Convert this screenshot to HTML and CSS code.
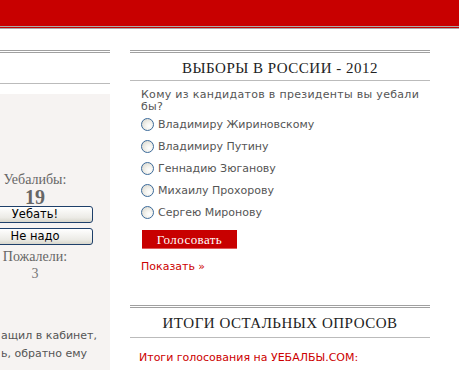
FILE: index.html
```html
<!DOCTYPE html>
<html lang="ru">
<head>
<meta charset="utf-8">
<link rel="stylesheet" href="styles.css">
</head>
<body>
<div class="header"></div>
<div class="main">
  <div class="left">
    <div class="left-title"></div>
    <div class="panel">
      <div class="votes">
        <div class="label">Уебалибы:</div>
        <div class="count">19</div>
        <div class="btn">Уебать!</div>
        <div class="btn">Не надо</div>
        <div class="label">Пожалели:</div>
        <div class="count-small">3</div>
      </div>
      <p class="story">ащил в кабинет,<br>ь, обратно ему</p>
    </div>
  </div>
  <div class="right">
    <div class="box-title">ВЫБОРЫ В РОССИИ - 2012</div>
    <div class="poll">
      <p class="question">Кому из кандидатов в президенты вы уебали бы?</p>
      <div class="option"><span class="radio"></span>Владимиру Жириновскому</div>
      <div class="option"><span class="radio"></span>Владимиру Путину</div>
      <div class="option"><span class="radio"></span>Геннадию Зюганову</div>
      <div class="option"><span class="radio"></span>Михаилу Прохорову</div>
      <div class="option"><span class="radio"></span>Сергею Миронову</div>
      <div class="vote-btn">Голосовать</div>
      <a class="show" href="#">Показать »</a>
    </div>
    <div class="box-title second">ИТОГИ ОСТАЛЬНЫХ ОПРОСОВ</div>
    <p class="results">Итоги голосования на УЕБАЛБЫ.COM:</p>
  </div>
</div>
</body>
</html>
```
FILE: styles.css
```css
html, body {
  margin: 0;
  padding: 0;
  background: #fff;
  overflow: hidden;
}
body {
  font-family: "DejaVu Sans", Verdana, sans-serif;
  font-size: 11px;
  color: #555;
  height: 370px;
}
.header {
  height: 26px;
  background: #c80000;
  border-bottom: 3px double #aaa;
}
.main {
  display: flex;
  gap: 20px;
  padding-top: 21px;
}
.left {
  width: 110px;
  overflow: hidden;
  flex: none;
}
.left-title {
  border-top: 3px double #a0a0a0;
  height: 30px;
  border-bottom: 1px solid #bbb;
}
.panel {
  margin-top: 10px;
  background: #f6f3f2;
  height: 198px;
  padding-top: 78px;
}
.votes {
  margin-left: -23px;
  width: 116px;
  display: flex;
  flex-direction: column;
  align-items: center;
  font-family: "Liberation Serif", "Times New Roman", serif;
  color: #666;
}
.label {
  font-size: 14px;
  line-height: 16px;
}
.count {
  font-size: 20px;
  font-weight: bold;
  line-height: 18px;
  color: #666;
}
.count-small {
  font-size: 14px;
  line-height: 18px;
  color: #777;
}
.btn {
  width: 114px;
  height: 15px;
  box-sizing: content-box;
  border: 1px solid #1e3f6a;
  border-radius: 3px;
  background: linear-gradient(#ffffff, #ecebe6 70%, #d8d6cc);
  font-family: "DejaVu Sans", Tahoma, sans-serif;
  font-size: 11.5px;
  line-height: 15px;
  color: #000;
  text-align: center;
  margin-bottom: 5px;
}
.btn + .btn {
  margin-bottom: 4px;
}
.story {
  margin: 44px 0 0 1px;
  line-height: 18px;
  white-space: nowrap;
}
.right {
  width: 300px;
  flex: none;
}
.box-title {
  border-top: 3px double #a0a0a0;
  border-bottom: 1px solid #bbb;
  height: 27px;
  line-height: 30px;
  text-align: center;
  font-family: "Liberation Serif", "Times New Roman", serif;
  font-size: 15px;
  letter-spacing: 0.5px;
  color: #222;
}
.box-title.second {
  margin-top: 31px;
  height: 29px;
  line-height: 30px;
}
.poll {
  padding-left: 11px;
}
.question {
  margin: 8px 0 0;
  letter-spacing: 0.3px;
  line-height: 12px;
}
.option {
  height: 22px;
  display: flex;
  align-items: center;
  gap: 4px;
}
.radio {
  width: 11px;
  height: 11px;
  border: 1px solid #3b6a9a;
  border-radius: 50%;
  background: radial-gradient(circle at 65% 65%, #fff 0, #f4f3ee 35%, #d4d2c8 100%);
  flex: none;
}
.vote-btn {
  margin: 7px 0 0 1px;
  width: 95px;
  height: 18px;
  background: #c80000;
  border-bottom: 1px solid #e05a5a;
  color: #fff;
  font-family: "Liberation Serif", "Times New Roman", serif;
  font-size: 13px;
  letter-spacing: 0.4px;
  line-height: 19px;
  text-align: center;
}
.show {
  display: block;
  margin-top: 11px;
  line-height: 14px;
  color: #c00;
  text-decoration: none;
}
.results {
  margin: 13px 0 0 9px;
  color: #c00;
  line-height: 14px;
}
```
